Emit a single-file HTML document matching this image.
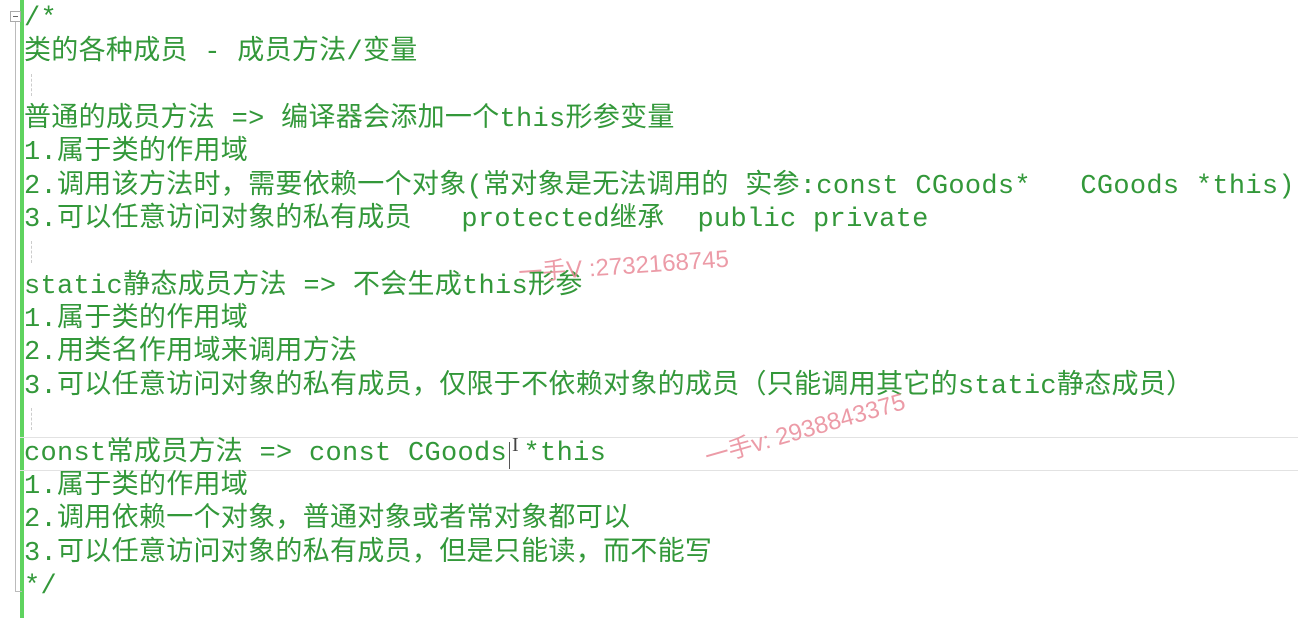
<!DOCTYPE html>
<html><head><meta charset="utf-8"><style>
html,body{margin:0;padding:0;background:#fff;width:1298px;height:618px;overflow:hidden;position:relative}
.l{position:absolute;left:24px;height:33px;line-height:33px;white-space:pre;font-family:"Liberation Mono","Noto Sans CJK SC",monospace;font-size:27px;letter-spacing:0.3px;color:#33983a}
.bar{position:absolute;left:20px;top:0;width:4px;height:618px;background:#5fd35f}
.gl{position:absolute;left:15px;top:22px;width:1px;height:570px;background:#bbb}
.gt{position:absolute;left:15px;top:591px;width:7px;height:1px;background:#bbb}
.box{position:absolute;left:10px;top:11px;width:9px;height:9px;border:1px solid #aaa;background:#fff}
.box:after{content:"";position:absolute;left:2px;top:4px;width:5px;height:1px;background:#666}
.dot{position:absolute;left:31px;width:0;height:22px;border-left:1px dashed #ccc}
.cur{position:absolute;left:20px;top:437px;width:1278px;height:32px;border-top:1px solid #e2e2e2;border-bottom:1px solid #e2e2e2}
.wm{position:absolute;font-family:"Liberation Sans","Noto Sans CJK SC",sans-serif;color:#e98a98;font-size:24px;white-space:pre;opacity:.85}
</style></head><body>
<div class="bar"></div>
<div class="gl"></div><div class="gt"></div>
<div class="box"></div>
<div class="dot" style="top:74px"></div>
<div class="dot" style="top:241px"></div>
<div class="dot" style="top:408px"></div>
<div class="cur"></div>
<div class="l" style="top:3px">/*</div>
<div class="l" style="top:37px">类的各种成员 - 成员方法/变量</div>
<div class="l" style="top:104px">普通的成员方法 => 编译器会添加一个this形参变量</div>
<div class="l" style="top:137px">1.属于类的作用域</div>
<div class="l" style="top:171px">2.调用该方法时，需要依赖一个对象(常对象是无法调用的 实参:const CGoods*   CGoods *this)</div>
<div class="l" style="top:204px">3.可以任意访问对象的私有成员   protected继承  public private</div>
<div class="l" style="top:271px">static静态成员方法 => 不会生成this形参</div>
<div class="l" style="top:304px">1.属于类的作用域</div>
<div class="l" style="top:337px">2.用类名作用域来调用方法</div>
<div class="l" style="top:371px">3.可以任意访问对象的私有成员，仅限于不依赖对象的成员（只能调用其它的static静态成员）</div>
<div class="l" style="top:438px">const常成员方法 => const CGoods *this</div>
<div class="l" style="top:471px">1.属于类的作用域</div>
<div class="l" style="top:504px">2.调用依赖一个对象，普通对象或者常对象都可以</div>
<div class="l" style="top:538px">3.可以任意访问对象的私有成员，但是只能读，而不能写</div>
<div class="l" style="top:571px">*/</div>
<div style="position:absolute;left:509px;top:442px;width:1px;height:27px;background:#555"></div>
<div style="position:absolute;left:512px;top:434px;font:20px 'Liberation Serif',serif;color:#444">I</div>
<div class="wm" style="left:518px;top:246px;transform:rotate(-4deg)">一手V :2732168745</div>
<div class="wm" style="left:705px;top:438px;transform:rotate(-16deg);transform-origin:left center">一手v: 2938843375</div>
</body></html>
